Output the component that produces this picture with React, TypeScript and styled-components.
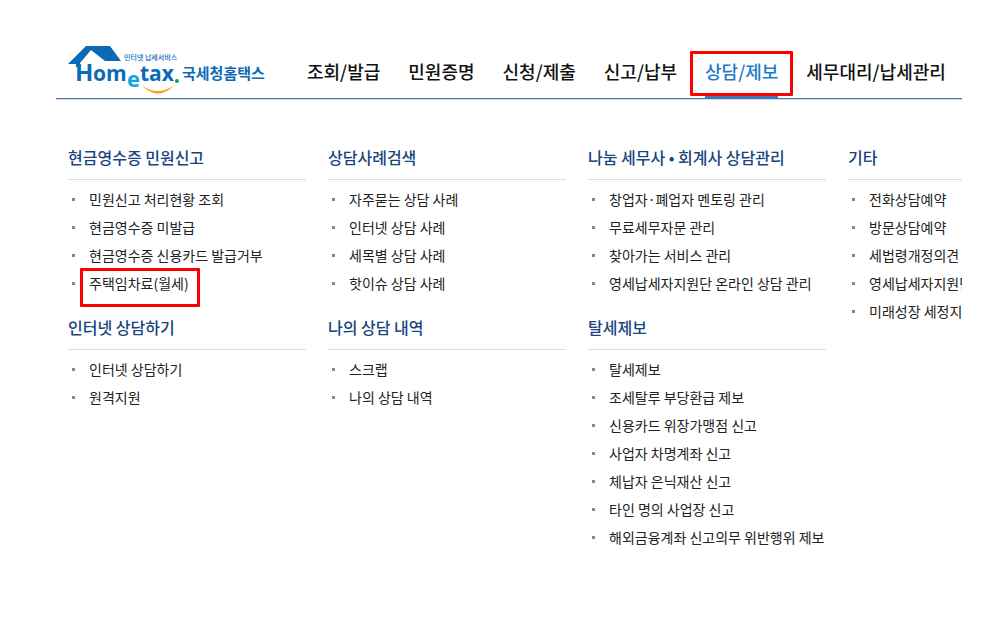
import React from "react";
import styled, { createGlobalStyle } from "styled-components";

const GlobalStyle = createGlobalStyle`
  * { box-sizing: border-box; }
  body {
    margin: 0;
    background: #fff;
    color: #222;
    font-family: "Noto Sans CJK KR", "Noto Sans", sans-serif;
  }
`;

const Page = styled.div`
  margin: 40px 21px 64px 56px;
  overflow: hidden;
`;

const Header = styled.header`
  display: flex;
  height: 59px;
  padding-left: 11px;
  border-bottom: 1px solid #4576ad;
  box-shadow: 0 1px 0 #c9d9ea;
`;

const LogoLink = styled.a`
  display: block;
  flex: none;
  width: 204px;
  margin-right: 36px;
`;

const Nav = styled.nav`
  display: flex;
  gap: 28px;
  height: 58px;
`;

const NavLink = styled.a<{ $active?: boolean }>`
  position: relative;
  flex: none;
  height: 58px;
  padding-top: 4px;
  border-bottom: ${(p) => (p.$active ? "3px solid #4273b3" : "0")};
  color: ${(p) => (p.$active ? "#1d7cc6" : "#111")};
  font-size: 18px;
  font-weight: 500;
  line-height: 54px;
  text-decoration: none;
  white-space: nowrap;
`;

const NavMarker = styled.span`
  position: absolute;
  inset: 11px -15px auto -15px;
  height: 45px;
  border: 3px solid #fe0000;
  border-radius: 1px;
`;

const Menu = styled.main`
  display: grid;
  grid-template-columns: repeat(4, 238px);
  gap: 22px;
  padding: 42px 0 0 12px;
`;

const Column = styled.div`
  display: flex;
  flex-direction: column;
  gap: 14px;
`;

const Title = styled.h2`
  margin: 0 0 5px;
  height: 39px;
  border-bottom: 1px solid #ddd;
  color: #184680;
  font-size: 16px;
  font-weight: 500;
  line-height: 32px;
  white-space: nowrap;
`;

const List = styled.ul`
  margin: 0;
  padding: 0;
  list-style: none;
`;

const Item = styled.li`
  display: flex;
  align-items: center;
  gap: 14px;
  height: 28px;
  padding-left: 4px;
  font-size: 14px;
  line-height: 28px;
  white-space: nowrap;

  &::before {
    content: "";
    width: 3px;
    height: 3px;
    background: #888;
  }
`;

const ItemLink = styled.a`
  position: relative;
  color: inherit;
  text-decoration: none;
`;

const ItemMarker = styled.span`
  position: absolute;
  inset: -1px -11px auto -9px;
  height: 39px;
  border: 3px solid #fe0000;
  border-radius: 1px;
`;

type Entry = { label: string; marked?: boolean };
type Group = { title: string; items: Entry[] };

const entries = (...labels: string[]): Entry[] => labels.map((label) => ({ label }));

const nav: (Entry & { active?: boolean })[] = [
  { label: "조회/발급" },
  { label: "민원증명" },
  { label: "신청/제출" },
  { label: "신고/납부" },
  { label: "상담/제보", active: true, marked: true },
  { label: "세무대리/납세관리" },
];

const columns: Group[][] = [
  [
    {
      title: "현금영수증 민원신고",
      items: [
        ...entries("민원신고 처리현황 조회", "현금영수증 미발급", "현금영수증 신용카드 발급거부"),
        { label: "주택임차료(월세)", marked: true },
      ],
    },
    { title: "인터넷 상담하기", items: entries("인터넷 상담하기", "원격지원") },
  ],
  [
    {
      title: "상담사례검색",
      items: entries("자주묻는 상담 사례", "인터넷 상담 사례", "세목별 상담 사례", "핫이슈 상담 사례"),
    },
    { title: "나의 상담 내역", items: entries("스크랩", "나의 상담 내역") },
  ],
  [
    {
      title: "나눔 세무사 • 회계사 상담관리",
      items: entries(
        "창업자·폐업자 멘토링 관리",
        "무료세무자문 관리",
        "찾아가는 서비스 관리",
        "영세납세자지원단 온라인 상담 관리",
      ),
    },
    {
      title: "탈세제보",
      items: entries(
        "탈세제보",
        "조세탈루 부당환급 제보",
        "신용카드 위장가맹점 신고",
        "사업자 차명계좌 신고",
        "체납자 은닉재산 신고",
        "타인 명의 사업장 신고",
        "해외금융계좌 신고의무 위반행위 제보",
      ),
    },
  ],
  [
    {
      title: "기타",
      items: entries("전화상담예약", "방문상담예약", "세법령개정의견", "영세납세자지원단", "미래성장 세정지원"),
    },
  ],
];

const Logo = () => (
  <svg width="204" height="56" viewBox="0 0 204 56" role="img" aria-label="Hometax 국세청홈택스">
    <path d="M19 6H43L54 21H38L24 10L13 23V27H9V24H1Z" fill="#0b6ab5" />
    <g fontFamily="Open Sans, Noto Sans, sans-serif" fontWeight="700" fill="#0b6ab5">
      <text x="8" y="41" fontSize="24">H</text>
      <text x="26" y="41" fontSize="21">om</text>
      <text x="60" y="47" fontSize="22" fill="#11a5df">e</text>
      <text x="73" y="41" fontSize="21">tax</text>
    </g>
    <circle cx="110" cy="41" r="2" fill="#16a34a" />
    <path d="M74 45Q91 57 107 45Q92 62 74 45Z" fill="#f6a11a" />
    <g fontFamily="Noto Sans CJK KR, sans-serif" fill="#0b6ab5">
      <text x="57" y="20" fontSize="7" fontWeight="500">인터넷 납세서비스</text>
      <text x="115" y="39" fontSize="15" fontWeight="700">국세청홈택스</text>
    </g>
  </svg>
);

export default function App() {
  return (
    <>
      <GlobalStyle />
      <Page>
        <Header>
          <LogoLink href="#home">
            <Logo />
          </LogoLink>
          <Nav>
            {nav.map((n) => (
              <NavLink key={n.label} href="#menu" $active={n.active}>
                {n.label}
                {n.marked && <NavMarker />}
              </NavLink>
            ))}
          </Nav>
        </Header>
        <Menu>
          {columns.map((groups, i) => (
            <Column key={i}>
              {groups.map((g) => (
                <section key={g.title}>
                  <Title>{g.title}</Title>
                  <List>
                    {g.items.map((item) => (
                      <Item key={item.label}>
                        <ItemLink href="#item">
                          {item.label}
                          {item.marked && <ItemMarker />}
                        </ItemLink>
                      </Item>
                    ))}
                  </List>
                </section>
              ))}
            </Column>
          ))}
        </Menu>
      </Page>
    </>
  );
}
